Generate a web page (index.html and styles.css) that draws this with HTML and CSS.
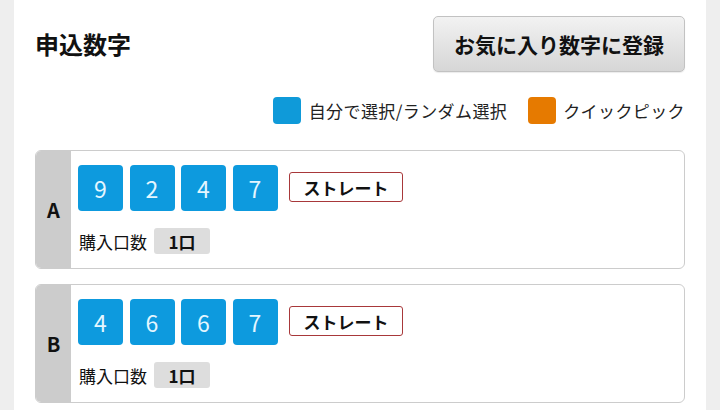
FILE: index.html
```html
<!DOCTYPE html>
<html lang="ja">
<head>
<meta charset="utf-8">
<link rel="stylesheet" href="styles.css">
</head>
<body>
<div class="panel">
  <div class="header">
    <h1 class="title">申込数字</h1>
    <button class="fav-btn">お気に入り数字に登録</button>
  </div>
  <div class="legend">
    <span class="swatch blue"></span><span class="legend-text">自分で選択/ランダム選択</span>
    <span class="swatch orange"></span><span class="legend-text">クイックピック</span>
  </div>
  <div class="cards">
    <div class="card">
      <div class="letter">A</div>
      <div class="content">
        <div class="nums">
          <span class="num">9</span><span class="num">2</span><span class="num">4</span><span class="num">7</span>
          <span class="type">ストレート</span>
        </div>
        <div class="qty">
          <span class="qty-label">購入口数</span><span class="qty-val">1口</span>
        </div>
      </div>
    </div>
    <div class="card">
      <div class="letter">B</div>
      <div class="content">
        <div class="nums">
          <span class="num">4</span><span class="num">6</span><span class="num">6</span><span class="num">7</span>
          <span class="type">ストレート</span>
        </div>
        <div class="qty">
          <span class="qty-label">購入口数</span><span class="qty-val">1口</span>
        </div>
      </div>
    </div>
  </div>
</div>
</body>
</html>
```

FILE: styles.css
```css
html, body {
  margin: 0;
  padding: 0;
  background: #eeeeee;
  font-family: "Noto Sans CJK JP", "Noto Sans", sans-serif;
  color: #111;
}
.panel {
  margin: 0 14px;
  background: #fff;
  padding: 16px 21px 20px 21px;
  min-height: 410px;
  box-sizing: border-box;
}
.header {
  display: flex;
  align-items: center;
  justify-content: space-between;
}
.title {
  margin: 0;
  font-size: 24px;
  font-weight: 700;
  line-height: 1;
}
.fav-btn {
  width: 252px;
  height: 56px;
  border: 1px solid #c2c2c2;
  border-radius: 5px;
  background: linear-gradient(#f2f2f2, #d6d6d6);
  font-family: inherit;
  font-size: 21px;
  font-weight: 700;
  color: #111;
  padding: 0;
  box-shadow: 0 1px 1px rgba(0,0,0,0.08);
}
.legend {
  display: flex;
  align-items: center;
  justify-content: flex-end;
  margin-top: 24px;
  height: 28px;
}
.swatch {
  width: 28px;
  height: 27px;
  border-radius: 4px;
  margin-right: 8px;
}
.swatch.blue { background: #0f9ad9; }
.swatch.orange { background: #e67a00; margin-left: 21px; margin-right: 7px; }
.legend-text {
  font-size: 17px;
  letter-spacing: 0.4px;
  color: #222;
  line-height: 1;
}
.cards {
  margin-top: 26px;
  display: flex;
  flex-direction: column;
  gap: 15px;
}
.card {
  display: flex;
  border: 1px solid #cccccc;
  border-radius: 6px;
  overflow: hidden;
  height: 119px;
  box-sizing: border-box;
}
.letter {
  width: 35px;
  background: #cccccc;
  display: flex;
  align-items: center;
  justify-content: center;
  font-size: 20px;
  font-weight: 700;
}
.content {
  padding: 14px 0 0 7px;
}
.nums {
  display: flex;
  align-items: center;
  gap: 6px;
}
.num {
  width: 45px;
  height: 46px;
  border-radius: 4px;
  background: #0d9ade;
  color: #e4f6ff;
  font-size: 23px;
  display: flex;
  align-items: center;
  justify-content: center;
  margin-right: 0.5px;
}
.type {
  margin-left: 5px;
  width: 114px;
  height: 30px;
  box-sizing: border-box;
  border: 1px solid #a8383a;
  border-radius: 3px;
  display: flex;
  align-items: center;
  justify-content: center;
  font-size: 17px;
  font-weight: 700;
  margin-top: -2px;
}
.qty {
  display: flex;
  align-items: center;
  margin-top: 17px;
}
.qty-label {
  font-size: 17px;
  margin-left: 1px;
  margin-right: 7px;
}
.qty-val {
  width: 56px;
  height: 26px;
  background: #dddddd;
  border-radius: 3px;
  display: flex;
  align-items: center;
  justify-content: center;
  font-size: 17px;
  font-weight: 700;
}
```
